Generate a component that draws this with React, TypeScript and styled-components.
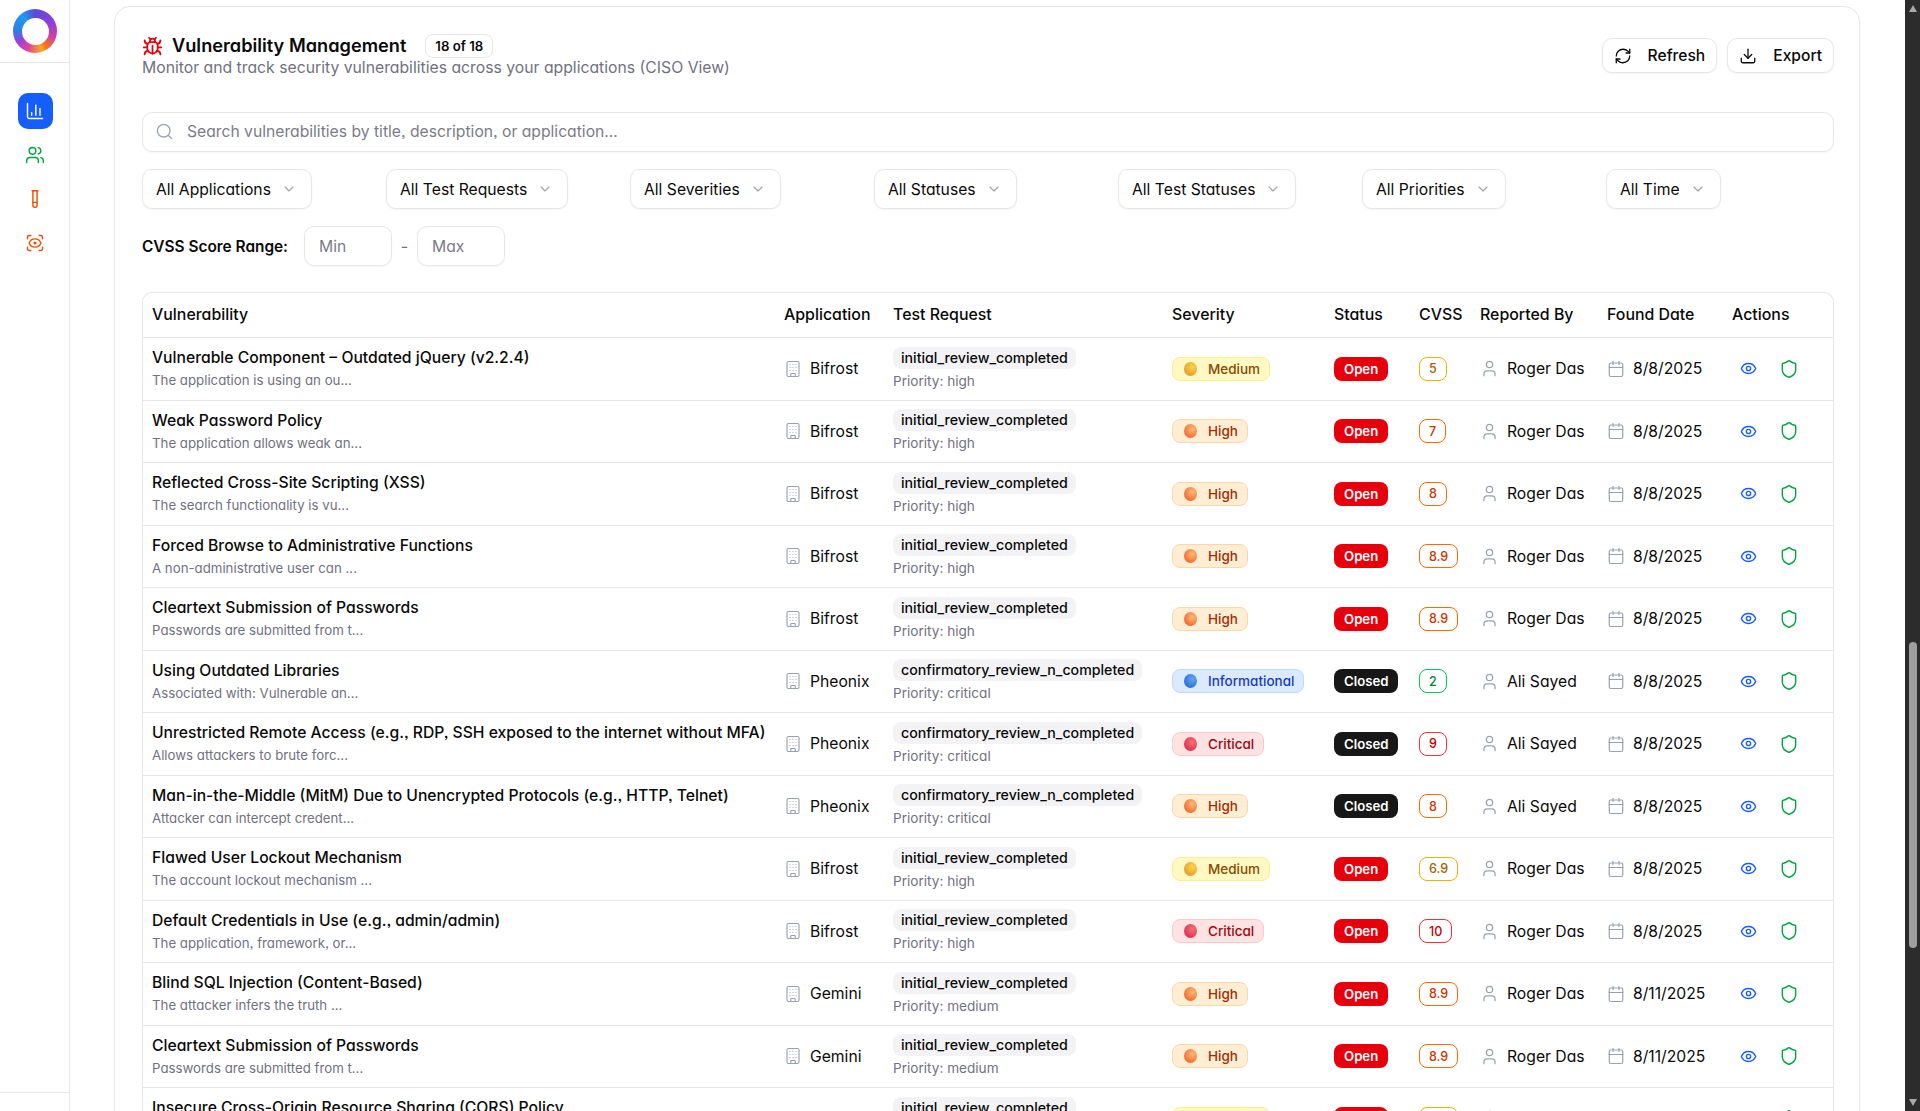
import styled, { createGlobalStyle } from "styled-components";
import {
  Bug,
  Building,
  Calendar,
  ChartColumn,
  ChevronDown,
  Download,
  Eye,
  RefreshCw,
  ScanEye,
  Search,
  Shield,
  TestTube,
  User,
  Users,
} from "lucide-react";

type Severity = "Medium" | "High" | "Critical" | "Informational";
type CvssTone = "yellow" | "orange" | "red" | "green";

interface IVulnerability {
  title: string;
  description: string;
  application: string;
  testRequest: string;
  priority: string;
  severity: Severity;
  status: "Open" | "Closed";
  cvss: string;
  tone: CvssTone;
  reporter: string;
  date: string;
}

const severityColors = {
  Medium: { bg: "#fef9c2", border: "#fff085", text: "#894b00", from: "#fcd34d", to: "#e08a1e" },
  High: { bg: "#ffedd4", border: "#ffd6a7", text: "#9f2d00", from: "#fdba74", to: "#f0501e" },
  Critical: { bg: "#ffe2e2", border: "#ffc9c9", text: "#9f0712", from: "#f87171", to: "#cf1f4a" },
  Informational: { bg: "#dbeafe", border: "#bedbff", text: "#193cb8", from: "#60a5fa", to: "#1f5fbf" },
};

const cvssColors = {
  yellow: { border: "#f0b100", text: "#a65f00" },
  orange: { border: "#ff6900", text: "#ca3500" },
  red: { border: "#fb2c36", text: "#c10007" },
  green: { border: "#00c950", text: "#008236" },
};

const initial = "initial_review_completed";
const confirmatory = "confirmatory_review_n_completed";

const vulnerabilities: IVulnerability[] = [
  { title: "Vulnerable Component – Outdated jQuery (v2.2.4)", description: "The application is using an ou...", application: "Bifrost", testRequest: initial, priority: "high", severity: "Medium", status: "Open", cvss: "5", tone: "yellow", reporter: "Roger Das", date: "8/8/2025" },
  { title: "Weak Password Policy", description: "The application allows weak an...", application: "Bifrost", testRequest: initial, priority: "high", severity: "High", status: "Open", cvss: "7", tone: "orange", reporter: "Roger Das", date: "8/8/2025" },
  { title: "Reflected Cross-Site Scripting (XSS)", description: "The search functionality is vu...", application: "Bifrost", testRequest: initial, priority: "high", severity: "High", status: "Open", cvss: "8", tone: "orange", reporter: "Roger Das", date: "8/8/2025" },
  { title: "Forced Browse to Administrative Functions", description: "A non-administrative user can ...", application: "Bifrost", testRequest: initial, priority: "high", severity: "High", status: "Open", cvss: "8.9", tone: "orange", reporter: "Roger Das", date: "8/8/2025" },
  { title: "Cleartext Submission of Passwords", description: "Passwords are submitted from t...", application: "Bifrost", testRequest: initial, priority: "high", severity: "High", status: "Open", cvss: "8.9", tone: "orange", reporter: "Roger Das", date: "8/8/2025" },
  { title: "Using Outdated Libraries", description: "Associated with: Vulnerable an...", application: "Pheonix", testRequest: confirmatory, priority: "critical", severity: "Informational", status: "Closed", cvss: "2", tone: "green", reporter: "Ali Sayed", date: "8/8/2025" },
  { title: "Unrestricted Remote Access (e.g., RDP, SSH exposed to the internet without MFA)", description: "Allows attackers to brute forc...", application: "Pheonix", testRequest: confirmatory, priority: "critical", severity: "Critical", status: "Closed", cvss: "9", tone: "red", reporter: "Ali Sayed", date: "8/8/2025" },
  { title: "Man-in-the-Middle (MitM) Due to Unencrypted Protocols (e.g., HTTP, Telnet)", description: "Attacker can intercept credent...", application: "Pheonix", testRequest: confirmatory, priority: "critical", severity: "High", status: "Closed", cvss: "8", tone: "orange", reporter: "Ali Sayed", date: "8/8/2025" },
  { title: "Flawed User Lockout Mechanism", description: "The account lockout mechanism ...", application: "Bifrost", testRequest: initial, priority: "high", severity: "Medium", status: "Open", cvss: "6.9", tone: "yellow", reporter: "Roger Das", date: "8/8/2025" },
  { title: "Default Credentials in Use (e.g., admin/admin)", description: "The application, framework, or...", application: "Bifrost", testRequest: initial, priority: "high", severity: "Critical", status: "Open", cvss: "10", tone: "red", reporter: "Roger Das", date: "8/8/2025" },
  { title: "Blind SQL Injection (Content-Based)", description: "The attacker infers the truth ...", application: "Gemini", testRequest: initial, priority: "medium", severity: "High", status: "Open", cvss: "8.9", tone: "orange", reporter: "Roger Das", date: "8/11/2025" },
  { title: "Cleartext Submission of Passwords", description: "Passwords are submitted from t...", application: "Gemini", testRequest: initial, priority: "medium", severity: "High", status: "Open", cvss: "8.9", tone: "orange", reporter: "Roger Das", date: "8/11/2025" },
  { title: "Insecure Cross-Origin Resource Sharing (CORS) Policy", description: "The application's CORS policy...", application: "Gemini", testRequest: initial, priority: "medium", severity: "Medium", status: "Open", cvss: "6.5", tone: "yellow", reporter: "Roger Das", date: "8/11/2025" },
];

const filters = ["All Applications", "All Test Requests", "All Severities", "All Statuses", "All Test Statuses", "All Priorities", "All Time"];
const columns = [
  { label: "Vulnerability", width: 633 },
  { label: "Application", width: 109 },
  { label: "Test Request", width: 279 },
  { label: "Severity", width: 162 },
  { label: "Status", width: 85 },
  { label: "CVSS", width: 61 },
  { label: "Reported By", width: 127 },
  { label: "Found Date", width: 125 },
  { label: "Actions", width: 109 },
];

const GlobalStyle = createGlobalStyle`
  html, body {
    margin: 0;
    height: 100%;
    overflow: hidden;
    background: #fff;
  }
  body {
    font-family: Inter, "Noto Sans", sans-serif;
    font-feature-settings: "cv11", "ss03";
    color: #0a0a0a;
  }
  * {
    box-sizing: border-box;
  }
`;

const Page = styled.div`
  display: flex;
  height: 100vh;
  overflow: hidden;
`;

const Sidebar = styled.aside`
  flex: 0 0 70px;
  display: flex;
  flex-direction: column;
  border-right: 1px solid #e5e7eb;
`;

const LogoBox = styled.div`
  height: 63px;
  padding-left: 1px;
  display: flex;
  align-items: center;
  justify-content: center;
  border-bottom: 1px solid #e5e7eb;
`;

const Logo = styled.div`
  width: 44px;
  height: 44px;
  border-radius: 50%;
  background: conic-gradient(#5b4bd8, #8b3fd9 60deg, #c93fb0 105deg, #f97316 145deg, #f9a826 160deg, #e0469a 200deg, #a03ed8 235deg, #2f7fe0 270deg, #1d9bf0 320deg, #5b4bd8);
  display: flex;
  align-items: center;
  justify-content: center;

  &::after {
    content: "";
    width: 27px;
    height: 27px;
    border-radius: 50%;
    background: #fff;
  }
`;

const SideNav = styled.nav`
  flex: 1;
  display: flex;
  flex-direction: column;
  align-items: center;
  padding: 30px 0 0 1px;
  gap: 8px;
`;

const SideItem = styled.a<{ $active?: boolean; $color: string }>`
  width: 35px;
  height: 36px;
  display: flex;
  align-items: center;
  justify-content: center;
  border-radius: 10px;
  color: ${(p) => p.$color};
  background: ${(p) => (p.$active ? "#155dfc" : "transparent")};
`;

const SideFooter = styled.div`
  height: 19px;
  border-top: 1px solid #e5e7eb;
`;

const Main = styled.main`
  flex: 1;
  min-width: 0;
  padding: 6px 45px 0 44px;
`;

const Card = styled.section`
  height: 1400px;
  padding: 27px 25px 0 27px;
  border: 1px solid #e5e7eb;
  border-radius: 16px;
  box-shadow: 0 1px 2px rgba(0, 0, 0, 0.04);
`;

const HeaderBar = styled.header`
  display: flex;
  justify-content: space-between;
  align-items: flex-start;
  height: 78px;
`;

const TitleRow = styled.div`
  display: flex;
  align-items: center;
  gap: 9px;
  height: 24px;
  color: #e7000b;
`;

const Title = styled.h1`
  margin: 0 0 3px;
  font-size: 18.2px;
  font-weight: 600;
  color: #0a0a0a;
`;

const CountBadge = styled.span`
  margin-left: 10px;
  height: 24px;
  padding: 0 9px;
  display: inline-flex;
  align-items: center;
  border: 1px solid #e5e7eb;
  border-radius: 8px;
  font-size: 13.2px;
  font-weight: 600;
  color: #0a0a0a;
`;

const Subtitle = styled.p`
  margin: -1px 0 0;
  font-size: 15.75px;
  line-height: 22px;
  color: #717182;
`;

const ButtonRow = styled.div`
  display: flex;
  gap: 10px;
  margin-top: 4px;
`;

const OutlineButton = styled.button`
  height: 35px;
  padding: 0 11px;
  display: inline-flex;
  align-items: center;
  gap: 16px;
  border: 1px solid #e5e7eb;
  border-radius: 10px;
  background: #fff;
  box-shadow: 0 1px 2px rgba(0, 0, 0, 0.05);
  font: inherit;
  font-size: 15.6px;
  font-weight: 500;
  color: #0a0a0a;
`;

const SearchBox = styled.div`
  height: 40px;
  padding: 0 12px 1px;
  display: flex;
  align-items: center;
  gap: 13px;
  border: 1px solid #e5e7eb;
  border-radius: 10px;
  box-shadow: 0 1px 2px rgba(0, 0, 0, 0.04);
  color: #7b7b8a;
  font-size: 15.7px;

  svg {
    color: #9ca3af;
  }
`;

const FilterGrid = styled.div`
  margin-top: 17px;
  display: grid;
  grid-template-columns: repeat(7, 1fr);
  gap: 16px;
  justify-items: start;
`;

const SelectButton = styled.button`
  height: 40px;
  padding: 0 14px 0 13px;
  display: inline-flex;
  align-items: center;
  gap: 10px;
  border: 1px solid #e5e7eb;
  border-radius: 10px;
  background: #fff;
  box-shadow: 0 1px 2px rgba(0, 0, 0, 0.05);
  font: inherit;
  font-size: 15.7px;
  color: #0a0a0a;

  svg {
    color: #a1a1aa;
  }
`;

const RangeRow = styled.div`
  margin-top: 17px;
  display: flex;
  align-items: center;
`;

const RangeLabel = styled.label`
  font-size: 15.4px;
  font-weight: 600;
  margin-right: 16px;
`;

const RangeInput = styled.div`
  width: 88px;
  height: 40px;
  padding: 0 14px;
  display: flex;
  align-items: center;
  border: 1px solid #e5e7eb;
  border-radius: 10px;
  box-shadow: 0 1px 2px rgba(0, 0, 0, 0.04);
  font-size: 15.7px;
  color: #7b7b8a;
`;

const RangeDash = styled.span`
  width: 25px;
  text-align: center;
  color: #717182;
`;

const TableWrap = styled.div`
  margin-top: 26px;
  border: 1px solid #e5e7eb;
  border-bottom: 0;
  border-radius: 10px 10px 0 0;
`;

const Table = styled.table`
  width: 100%;
  table-layout: fixed;
  border-collapse: separate;
  border-spacing: 0;
`;

const Col = styled.col<{ $width: number }>`
  width: ${(p) => p.$width}px;
`;

const HeadCell = styled.th`
  height: 45px;
  padding: 0 8px 2px;
  text-align: left;
  font-size: 15.9px;
  font-weight: 500;
  white-space: nowrap;
  border-bottom: 1px solid #e5e7eb;

  &:first-child {
    padding-left: 9px;
  }
`;

const Cell = styled.td`
  height: 62.5px;
  padding: 0 8px;
  font-size: 15.7px;
  white-space: nowrap;
  border-bottom: 1px solid #e5e7eb;

  &:first-child {
    padding-left: 9px;
  }
`;

const RowTitle = styled.div`
  font-size: 15.7px;
  font-weight: 500;
  line-height: 22px;
`;

const RowDescription = styled.div`
  margin-top: 1px;
  font-size: 13.25px;
  line-height: 20px;
  color: #717182;
`;

const IconText = styled.span`
  display: flex;
  align-items: center;
  gap: 8px;

  svg {
    color: #99a1af;
    flex: none;
  }
`;

const RequestTag = styled.span`
  display: inline-block;
  height: 22px;
  padding: 0 8px;
  border-radius: 8px;
  background: #f3f3f5;
  font-size: 14.2px;
  font-weight: 500;
  line-height: 22px;
`;

const PriorityText = styled.div`
  margin-top: 2px;
  font-size: 13.6px;
  line-height: 20px;
  color: #717182;
`;

const Pill = styled.span`
  display: inline-flex;
  align-items: center;
  height: 24px;
  border-radius: 8px;
  font-size: 13.2px;
  font-weight: 500;
`;

const SeverityPill = styled(Pill)<{ $level: Severity }>`
  padding: 0 9px 0 11px;
  gap: 11px;
  border: 1px solid ${(p) => severityColors[p.$level].border};
  background: ${(p) => severityColors[p.$level].bg};
  color: ${(p) => severityColors[p.$level].text};
  font-size: 13.5px;
`;

const SeverityDot = styled.span<{ $level: Severity }>`
  width: 13px;
  height: 14px;
  border-radius: 50%;
  background: radial-gradient(circle at 65% 35%, ${(p) => severityColors[p.$level].from}, ${(p) => severityColors[p.$level].to});
`;

const StatusPill = styled(Pill)<{ $closed: boolean }>`
  padding: 0 10px;
  background: ${(p) => (p.$closed ? "#171717" : "#e7000b")};
  color: #fff;
  font-weight: 600;
`;

const CvssPill = styled(Pill)<{ $tone: CvssTone }>`
  padding: 0 9px;
  background: #fff;
  border: 1px solid ${(p) => cvssColors[p.$tone].border};
  color: ${(p) => cvssColors[p.$tone].text};
  font-size: 12.5px;
`;

const ActionRow = styled.div`
  display: flex;
  gap: 9px;
`;

const ActionButton = styled.button<{ $color: string }>`
  width: 32px;
  height: 32px;
  padding: 0;
  display: flex;
  align-items: center;
  justify-content: center;
  border: 0;
  background: transparent;
  color: ${(p) => p.$color};
`;

const ScrollTrack = styled.div`
  flex: 0 0 15px;
  display: flex;
  flex-direction: column;
  align-items: center;
  background: #2c2c2c;
`;

const ScrollArrow = styled.span<{ $down?: boolean }>`
  margin-top: ${(p) => (p.$down ? "auto" : "5px")};
  margin-bottom: ${(p) => (p.$down ? "5px" : "0")};
  width: 0;
  height: 0;
  border-left: 4px solid transparent;
  border-right: 4px solid transparent;
  border-bottom: ${(p) => (p.$down ? "0" : "7px solid #a8a8a8")};
  border-top: ${(p) => (p.$down ? "7px solid #a8a8a8" : "0")};
`;

const ScrollThumb = styled.div`
  margin-top: 630px;
  width: 8px;
  height: 306px;
  border-radius: 4px;
  background: #9f9f9f;
`;

function Row({ item }: { item: IVulnerability }) {
  return (
    <tr>
      <Cell>
        <RowTitle>{item.title}</RowTitle>
        <RowDescription>{item.description}</RowDescription>
      </Cell>
      <Cell>
        <IconText>
          <Building size={18} strokeWidth={1.5} />
          {item.application}
        </IconText>
      </Cell>
      <Cell>
        <RequestTag>{item.testRequest}</RequestTag>
        <PriorityText>Priority: {item.priority}</PriorityText>
      </Cell>
      <Cell>
        <SeverityPill $level={item.severity}>
          <SeverityDot $level={item.severity} />
          {item.severity}
        </SeverityPill>
      </Cell>
      <Cell>
        <StatusPill $closed={item.status === "Closed"}>{item.status}</StatusPill>
      </Cell>
      <Cell>
        <CvssPill $tone={item.tone}>{item.cvss}</CvssPill>
      </Cell>
      <Cell>
        <IconText>
          <User size={19} strokeWidth={1.6} />
          {item.reporter}
        </IconText>
      </Cell>
      <Cell>
        <IconText>
          <Calendar size={18} strokeWidth={1.6} />
          {item.date}
        </IconText>
      </Cell>
      <Cell>
        <ActionRow>
          <ActionButton $color="#155dfc">
            <Eye size={17} />
          </ActionButton>
          <ActionButton $color="#00a63e">
            <Shield size={20} strokeWidth={1.7} />
          </ActionButton>
        </ActionRow>
      </Cell>
    </tr>
  );
}

export default function App() {
  return (
    <>
      <GlobalStyle />
      <Page>
        <Sidebar>
          <LogoBox>
            <Logo />
          </LogoBox>
          <SideNav>
            <SideItem $active $color="#fff">
              <ChartColumn size={20} strokeWidth={1.7} />
            </SideItem>
            <SideItem $color="#00a63e">
              <Users size={20} strokeWidth={1.7} />
            </SideItem>
            <SideItem $color="#f54900">
              <TestTube size={20} strokeWidth={1.7} />
            </SideItem>
            <SideItem $color="#f54900">
              <ScanEye size={20} strokeWidth={1.7} />
            </SideItem>
          </SideNav>
          <SideFooter />
        </Sidebar>
        <Main>
          <Card>
            <HeaderBar>
              <div>
                <TitleRow>
                  <Bug size={21} />
                  <Title>Vulnerability Management</Title>
                  <CountBadge>18 of 18</CountBadge>
                </TitleRow>
                <Subtitle>Monitor and track security vulnerabilities across your applications (CISO View)</Subtitle>
              </div>
              <ButtonRow>
                <OutlineButton>
                  <RefreshCw size={18} strokeWidth={1.7} />
                  Refresh
                </OutlineButton>
                <OutlineButton>
                  <Download size={18} strokeWidth={1.7} />
                  Export
                </OutlineButton>
              </ButtonRow>
            </HeaderBar>
            <SearchBox>
              <Search size={19} strokeWidth={1.7} />
              Search vulnerabilities by title, description, or application...
            </SearchBox>
            <FilterGrid>
              {filters.map((label) => (
                <SelectButton key={label}>
                  {label}
                  <ChevronDown size={16} strokeWidth={1.6} />
                </SelectButton>
              ))}
            </FilterGrid>
            <RangeRow>
              <RangeLabel>CVSS Score Range:</RangeLabel>
              <RangeInput>Min</RangeInput>
              <RangeDash>-</RangeDash>
              <RangeInput>Max</RangeInput>
            </RangeRow>
            <TableWrap>
              <Table>
                <colgroup>
                  {columns.map((col) => (
                    <Col key={col.label} $width={col.width} />
                  ))}
                </colgroup>
                <thead>
                  <tr>
                    {columns.map((col) => (
                      <HeadCell key={col.label}>{col.label}</HeadCell>
                    ))}
                  </tr>
                </thead>
                <tbody>
                  {vulnerabilities.map((item, i) => (
                    <Row key={i} item={item} />
                  ))}
                </tbody>
              </Table>
            </TableWrap>
          </Card>
        </Main>
        <ScrollTrack>
          <ScrollArrow />
          <ScrollThumb />
          <ScrollArrow $down />
        </ScrollTrack>
      </Page>
    </>
  );
}
